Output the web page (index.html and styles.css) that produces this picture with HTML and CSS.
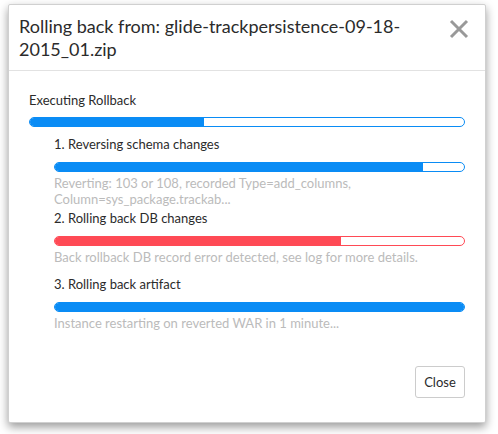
FILE: index.html
```html
<!DOCTYPE html>
<html>
<head>
<meta charset="utf-8">
<link rel="stylesheet" href="styles.css">
</head>
<body>
<div class="modal">
  <div class="modal-header">
    <h1 class="title">Rolling back from: glide-trackpersistence-09-18-2015_01.zip</h1>
    <button class="x" aria-label="Close"><svg width="20" height="20" viewBox="0 0 20 20"><path d="M2 2L18 18M18 2L2 18" stroke="#999" stroke-width="3" stroke-linecap="butt"/></svg></button>
  </div>
  <div class="modal-body">
    <div class="label">Executing Rollback</div>
    <div class="bar blue first"><div class="fill" style="width:40%"></div></div>
    <div class="steps">
      <div class="label">1. Reversing schema changes</div>
      <div class="bar blue"><div class="fill" style="width:90%"></div></div>
      <div class="note">Reverting: 103 or 108, recorded Type=add_columns, Column=sys_package.trackab...</div>
      <div class="label">2. Rolling back DB changes</div>
      <div class="bar red"><div class="fill" style="width:70%"></div></div>
      <div class="note">Back rollback DB record error detected, see log for more details.</div>
      <div class="label l3">3. Rolling back artifact</div>
      <div class="bar blue"><div class="fill" style="width:100%"></div></div>
      <div class="note">Instance restarting on reverted WAR in 1 minute...</div>
    </div>
  </div>
  <div class="modal-footer">
    <button class="btn">Close</button>
  </div>
</div>
</body>
</html>
```
FILE: styles.css
```css
html, body { margin: 0; padding: 0; }
body {
  background: #fff;
  font-family: Lato, "Liberation Sans", sans-serif;
  color: #2b2b2b;
  width: 498px;
  height: 434px;
  overflow: hidden;
}
.modal {
  margin: 4px 0 0 8px;
  width: 478px;
  height: 419px;
  background: #fff;
  border: 1px solid #d0d0d0;
  box-sizing: border-box;
  box-shadow: 0 4px 10px rgba(0,0,0,0.4);
  border-radius: 2px;
  display: flex;
  flex-direction: column;
}
.modal-header {
  display: flex;
  align-items: flex-start;
  justify-content: space-between;
  padding: 10px 16px 0 10px;
  height: 66px;
  box-sizing: border-box;
  border-bottom: 1px solid #e2e2e2;
}
.title {
  margin: 0;
  font-size: 18px;
  font-weight: normal;
  line-height: 23px;
  width: 385px;
  color: #2b2b2b;
}
.x {
  border: 0;
  background: none;
  padding: 0;
  margin-top: 4px;
  width: 20px;
  height: 20px;
}
.modal-body {
  padding: 20px 20px 0 20px;
  flex: 1;
}
.label {
  font-size: 13px;
  line-height: 18px;
}
.bar {
  height: 10px;
  border-radius: 5px;
  box-sizing: border-box;
  border: 1px solid;
  overflow: hidden;
  margin: 9px 0 3px;
}
.bar.first { margin: 8px 0 8px; }
.bar .fill { height: 100%; }
.blue { border-color: #0a8cf5; }
.blue .fill { background: #0a8cf5; }
.red { border-color: #ff4a55; }
.red .fill { background: #ff4a55; }
.steps { padding-left: 25px; }
.note {
  color: #bbb;
  font-size: 13px;
  line-height: 16px;
  margin-bottom: 2px;
}
.l3 { margin-top: 10px; }
.modal-footer {
  display: flex;
  justify-content: flex-end;
  padding: 0 20px 24px;
}
.btn {
  font-family: inherit;
  font-size: 13px;
  color: #2b2b2b;
  background: #fff;
  border: 1px solid #ccc;
  border-radius: 3px;
  width: 50px;
  height: 32px;
}
```
